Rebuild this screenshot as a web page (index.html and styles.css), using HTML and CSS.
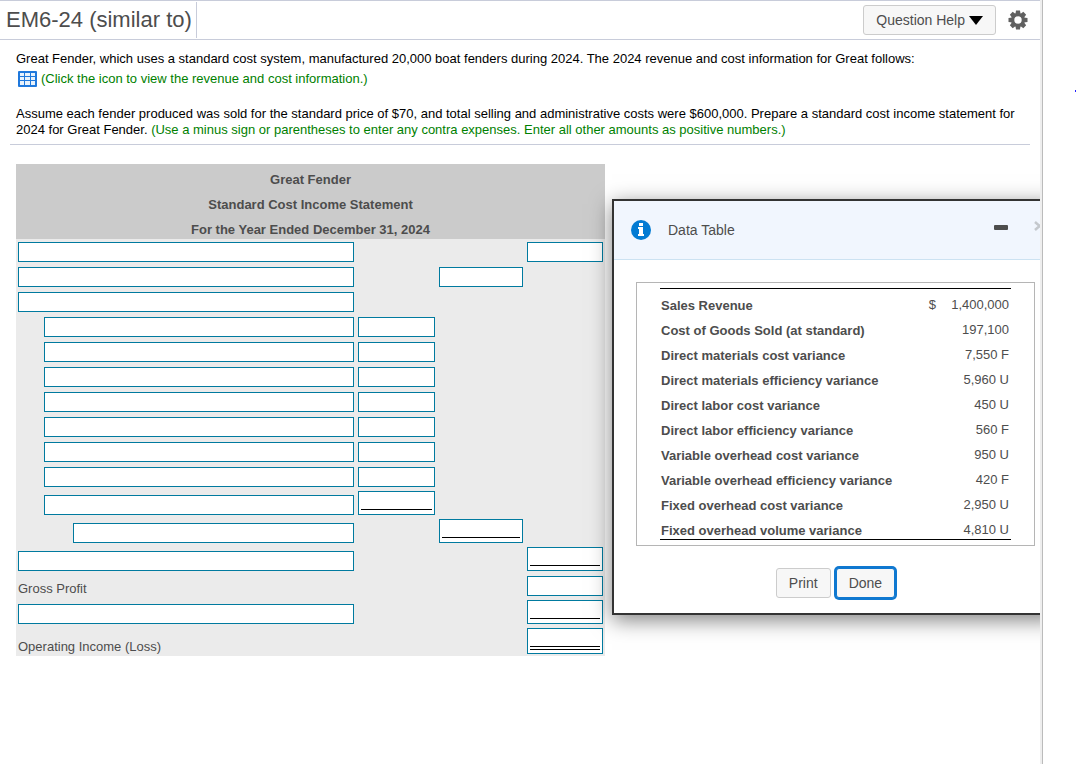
FILE: index.html
```
<!DOCTYPE html>
<html lang="en">
  <head>
    <title>EM6-24 (similar to)</title>
    <link rel="stylesheet" href="styles.css">
    <meta name="viewport" content="width=device-width, initial-scale=1">
    <meta charset="utf-8">
  </head>
  <body>
    <div id="page">
      <main id="exercise">
        <header class="top-bar">
          <h1 class="title">EM6-24 (similar to)</h1>
          <div class="tools">
            <button type="button" class="btn btn-help">Question Help
              <svg width="14" height="9" viewBox="0 0 14 9" aria-hidden="true"><path d="M0 0h14L7 9z" fill="#000"/></svg>
            </button>
            <button type="button" class="btn-icon" title="Settings">
              <svg width="20" height="20" viewBox="0 0 20 20" aria-hidden="true">
                <g fill="#606060">
                  <path id="tooth" d="M8 0.5h4l0.6 4h-5.2z"/>
                  <use href="#tooth" transform="rotate(45 10 10)"/>
                  <use href="#tooth" transform="rotate(90 10 10)"/>
                  <use href="#tooth" transform="rotate(135 10 10)"/>
                  <use href="#tooth" transform="rotate(180 10 10)"/>
                  <use href="#tooth" transform="rotate(225 10 10)"/>
                  <use href="#tooth" transform="rotate(270 10 10)"/>
                  <use href="#tooth" transform="rotate(315 10 10)"/>
                </g>
                <circle cx="10" cy="10" r="5.3" fill="none" stroke="#606060" stroke-width="3.2"/>
              </svg>
            </button>
          </div>
        </header>

        <section class="question">
          <p>Great Fender, which uses a standard cost system, manufactured 20,000 boat fenders during 2024. The 2024 revenue and cost information for Great follows:</p>
          <p class="open-data">
            <svg width="19" height="16" viewBox="0 0 19 16" aria-hidden="true">
              <rect width="19" height="16" rx="1" fill="#1f78dc"/>
              <path d="M2 2h4v3H2zM7 2h5v3H7zM13 2h4v3h-4zM2 6h4v3H2zM7 6h5v3H7zM13 6h4v3h-4zM2 10h4v4H2zM7 10h5v4H7zM13 10h4v4h-4z" fill="#e8f2fc"/>
            </svg>
            <a href="#data-table" class="hint">(Click the icon to view the revenue and cost information.)</a>
          </p>
          <p>Assume each fender produced was sold for the standard price of $70, and total selling and administrative costs were $600,000. Prepare a standard cost income statement for 2024 for Great Fender. <span class="hint">(Use a minus sign or parentheses to enter any contra expenses. Enter all other amounts as positive numbers.)</span></p>
        </section>

        <table class="statement">
          <colgroup>
            <col class="col-name">
            <col class="col-detail">
            <col class="col-subtotal">
            <col class="col-total">
          </colgroup>
          <thead>
            <tr><th colspan="4">Great Fender</th></tr>
            <tr><th colspan="4">Standard Cost Income Statement</th></tr>
            <tr><th colspan="4">For the Year Ended December 31, 2024</th></tr>
          </thead>
          <tbody>
            <tr>
              <td><input type="text" class="field" aria-label="Account 1"></td>
              <td></td>
              <td></td>
              <td><input type="text" class="field" aria-label="Amount 1"></td>
            </tr>
            <tr>
              <td><input type="text" class="field" aria-label="Account 2"></td>
              <td></td>
              <td><input type="text" class="field" aria-label="Amount 2"></td>
              <td></td>
            </tr>
            <tr>
              <td><input type="text" class="field" aria-label="Account 3"></td>
              <td></td>
              <td></td>
              <td></td>
            </tr>
            <tr>
              <td class="indent"><input type="text" class="field" aria-label="Account 4"></td>
              <td><input type="text" class="field" aria-label="Amount 4"></td>
              <td></td>
              <td></td>
            </tr>
            <tr>
              <td class="indent"><input type="text" class="field" aria-label="Account 5"></td>
              <td><input type="text" class="field" aria-label="Amount 5"></td>
              <td></td>
              <td></td>
            </tr>
            <tr>
              <td class="indent"><input type="text" class="field" aria-label="Account 6"></td>
              <td><input type="text" class="field" aria-label="Amount 6"></td>
              <td></td>
              <td></td>
            </tr>
            <tr>
              <td class="indent"><input type="text" class="field" aria-label="Account 7"></td>
              <td><input type="text" class="field" aria-label="Amount 7"></td>
              <td></td>
              <td></td>
            </tr>
            <tr>
              <td class="indent"><input type="text" class="field" aria-label="Account 8"></td>
              <td><input type="text" class="field" aria-label="Amount 8"></td>
              <td></td>
              <td></td>
            </tr>
            <tr>
              <td class="indent"><input type="text" class="field" aria-label="Account 9"></td>
              <td><input type="text" class="field" aria-label="Amount 9"></td>
              <td></td>
              <td></td>
            </tr>
            <tr>
              <td class="indent"><input type="text" class="field" aria-label="Account 10"></td>
              <td><input type="text" class="field" aria-label="Amount 10"></td>
              <td></td>
              <td></td>
            </tr>
            <tr>
              <td class="indent"><input type="text" class="field" aria-label="Account 11"></td>
              <td><div class="sum"><input type="text" aria-label="Amount 11"></div></td>
              <td></td>
              <td></td>
            </tr>
            <tr>
              <td class="indent-more"><input type="text" class="field" aria-label="Account 12"></td>
              <td></td>
              <td><div class="sum"><input type="text" aria-label="Amount 12"></div></td>
              <td></td>
            </tr>
            <tr>
              <td><input type="text" class="field" aria-label="Account 13"></td>
              <td></td>
              <td></td>
              <td><div class="sum"><input type="text" aria-label="Amount 13"></div></td>
            </tr>
            <tr>
              <td><label for="gross-profit">Gross Profit</label></td>
              <td></td>
              <td></td>
              <td><input type="text" class="field" id="gross-profit"></td>
            </tr>
            <tr>
              <td><input type="text" class="field" aria-label="Account 15"></td>
              <td></td>
              <td></td>
              <td><div class="sum"><input type="text" aria-label="Amount 15"></div></td>
            </tr>
            <tr>
              <td><label for="operating-income">Operating Income (Loss)</label></td>
              <td></td>
              <td></td>
              <td><div class="sum grand"><input type="text" id="operating-income"></div></td>
            </tr>
          </tbody>
        </table>

        <div id="data-table" class="dialog" role="dialog" aria-labelledby="dialog-title">
          <div class="dialog-head">
            <svg width="20" height="20" viewBox="0 0 20 20" aria-hidden="true">
              <circle cx="10" cy="10" r="10" fill="#037bd3"/>
              <path d="M8 3h4v3H8zM7 7h5v7h1v2H7v-2h1V9H7z" fill="#fff"/>
            </svg>
            <h2 id="dialog-title">Data Table</h2>
            <button type="button" class="btn-icon btn-minimize" title="Minimize">
              <svg width="14" height="5" viewBox="0 0 14 5" aria-hidden="true"><rect width="14" height="5" rx="1" fill="#4d4d4d"/></svg>
            </button>
            <button type="button" class="btn-icon btn-close" title="Close">
              <svg width="11" height="10" viewBox="0 0 11 10" aria-hidden="true"><path d="M1 1l9 8M10 1l-9 8" stroke="#c4c8cd" stroke-width="2.5"/></svg>
            </button>
          </div>
          <div class="dialog-body">
            <div class="data-frame">
              <table class="data">
                <tr><th>Sales Revenue</th><td class="currency">$</td><td>1,400,000</td></tr>
                <tr><th>Cost of Goods Sold (at standard)</th><td></td><td>197,100</td></tr>
                <tr><th>Direct materials cost variance</th><td></td><td>7,550 F</td></tr>
                <tr><th>Direct materials efficiency variance</th><td></td><td>5,960 U</td></tr>
                <tr><th>Direct labor cost variance</th><td></td><td>450 U</td></tr>
                <tr><th>Direct labor efficiency variance</th><td></td><td>560 F</td></tr>
                <tr><th>Variable overhead cost variance</th><td></td><td>950 U</td></tr>
                <tr><th>Variable overhead efficiency variance</th><td></td><td>420 F</td></tr>
                <tr><th>Fixed overhead cost variance</th><td></td><td>2,950 U</td></tr>
                <tr><th>Fixed overhead volume variance</th><td></td><td>4,810 U</td></tr>
              </table>
            </div>
            <div class="dialog-actions">
              <button type="button" class="btn">Print</button>
              <button type="button" class="btn btn-primary">Done</button>
            </div>
          </div>
        </div>
      </main>
      <aside id="side"><span class="marker"></span></aside>
    </div>
  </body>
</html>
```

FILE: styles.css
```
* {
  box-sizing: border-box;
}
body {
  margin: 0;
  font-family: "Liberation Sans", Arial, sans-serif;
  font-size: 13px;
  line-height: 16px;
  color: #000;
  background-color: #fff;
}
#page {
  display: flex;
  min-height: 100vh;
}
#exercise {
  flex: 1;
  position: relative;
  overflow: hidden;
  border-top: 1px solid #c8ccda;
}
#side {
  display: flex;
  justify-content: flex-end;
  width: 36px;
  padding-top: 90px;
  border-left: 2px solid #eee;
  box-shadow: inset 1px 0 #bbb;
}
.marker {
  width: 1px;
  height: 2px;
  background-color: #22f;
}

/* top bar */
.top-bar {
  display: flex;
  justify-content: space-between;
  height: 39px;
  border-bottom: 1px solid #c8ccda;
}
.title {
  margin: 1px 0;
  padding: 0 4px 0 6px;
  border-right: 1px solid #c8ccda;
  font-size: 22px;
  font-weight: normal;
  line-height: 36px;
  color: #4d4d4d;
}
.tools {
  display: flex;
  align-items: center;
  gap: 12px;
  padding-right: 12px;
}
.btn {
  height: 30px;
  padding: 0 12px;
  border: 1px solid #ccc;
  border-radius: 3px;
  background-color: #f7f7f7;
  font-family: inherit;
  font-size: 14px;
  color: #4d4d4d;
}
.btn-help {
  display: flex;
  align-items: center;
  gap: 4px;
}
.btn-icon {
  display: flex;
  padding: 0;
  border: 0;
  background: none;
}

/* question text */
.question {
  margin: 0 10px;
  padding: 11px 6px 6px;
  border-bottom: 1px solid #c8ccda;
}
.question p {
  margin: 0;
}
.question .open-data {
  display: flex;
  gap: 4px;
  margin: 4px 0 19px 2px;
}
.hint {
  color: #008000;
  text-decoration: none;
}

/* income statement */
.statement {
  width: 589px;
  margin: 19px 16px;
  border-collapse: collapse;
  table-layout: fixed;
  background-color: #ebebeb;
  color: #4d4d4d;
}
.col-detail {
  width: 81px;
}
.col-subtotal {
  width: 88px;
}
.col-total {
  width: 80px;
}
.statement th,
.statement td {
  height: 25px;
  padding: 2px;
  vertical-align: bottom;
}
.statement th {
  padding-bottom: 1px;
  background-color: #cbcbcb;
}
.statement label {
  display: block;
  line-height: 14px;
}
.statement .indent {
  padding-left: 28px;
}
.statement .indent-more {
  padding-left: 57px;
}
.field,
.sum {
  display: block;
  width: 100%;
  height: 20px;
  border: 1px solid #007a9f;
  background-color: #fff;
}
.sum {
  height: 24px;
  padding: 0 2px;
}
.sum input {
  display: block;
  width: 100%;
  height: 18px;
  padding: 0;
  border: 0;
  border-bottom: 1px solid #000;
}
.sum.grand {
  height: 26px;
}
.sum.grand input {
  height: 21px;
  border-bottom: 4px double #000;
}

/* data table dialog */
.dialog {
  position: absolute;
  top: 198px;
  right: -19px;
  width: 447px;
  border: 2px solid #333;
  background-color: #fff;
  box-shadow: 0 5px 20px rgba(0, 0, 0, 0.5);
  color: #4d4d4d;
}
.dialog-head {
  display: flex;
  align-items: center;
  height: 59px;
  padding: 0 12px 0 17px;
  border-bottom: 1px solid #cce2f2;
  background-color: #f1f6fe;
}
.dialog-head h2 {
  flex: 1;
  margin: 0;
  padding-left: 17px;
  font-size: 14px;
  font-weight: normal;
}
.btn-minimize {
  margin-bottom: 5px;
}
.btn-close {
  margin: 0 0 8px 26px;
}
.dialog-body {
  padding: 22px 22px 15px;
}
.data-frame {
  padding: 5px 23px;
  border: 1px solid #b5b5b5;
}
.data {
  width: 100%;
  border-spacing: 0;
  border-top: 1px solid #000;
  border-bottom: 1px solid #000;
}
.data th,
.data td {
  height: 25px;
  padding: 0 2px 1px 1px;
  text-align: right;
  vertical-align: bottom;
}
.data th {
  padding-bottom: 0;
  text-align: left;
}
.data .currency {
  padding-right: 6px;
}
.dialog-actions {
  display: flex;
  justify-content: center;
  gap: 5px;
  padding-top: 22px;
}
.btn-primary {
  border-color: #0f78d0;
  box-shadow: 0 0 0 2px #0f78d0;
}
```
